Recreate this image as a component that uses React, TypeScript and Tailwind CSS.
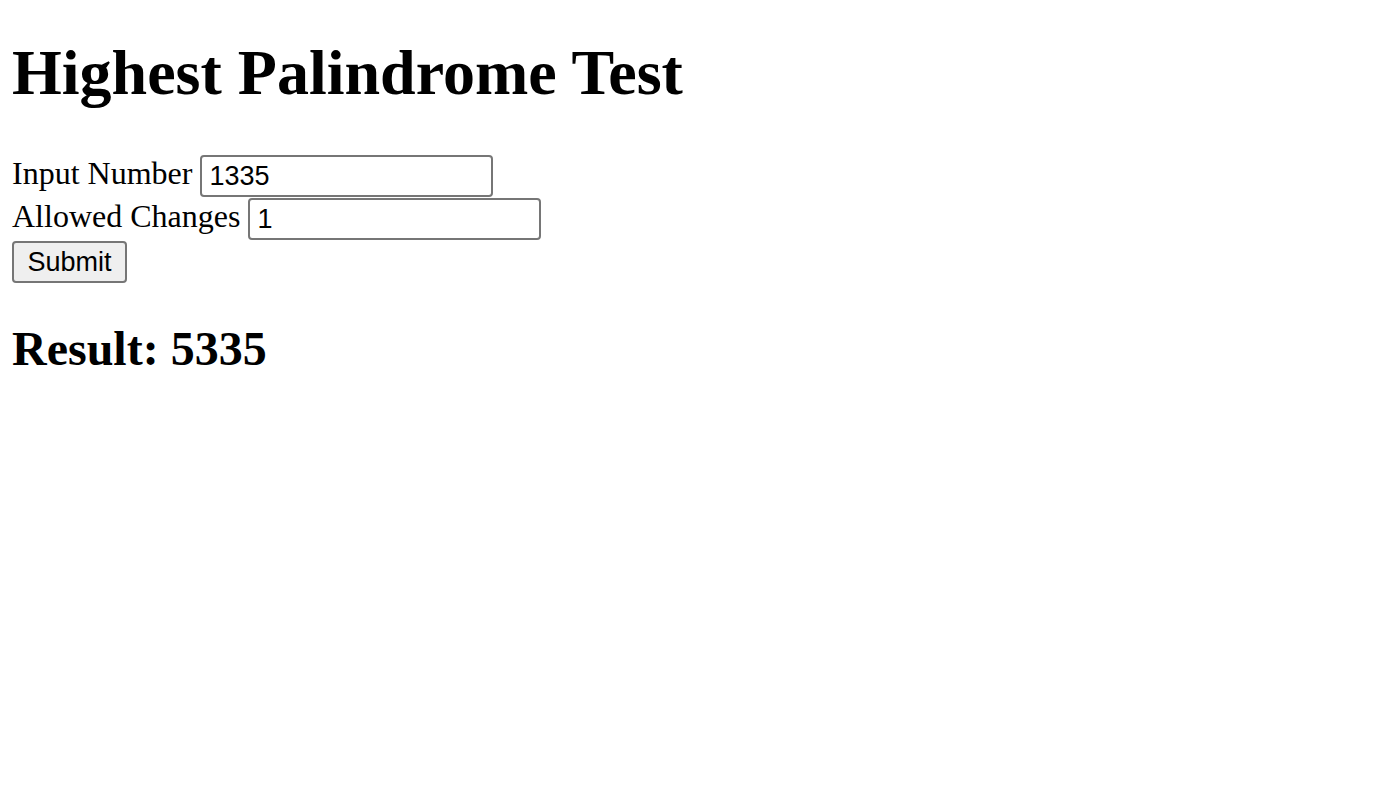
import React, { useState } from 'react';

export default function App() {
  const [num, setNum] = useState('1335');
  const [changes, setChanges] = useState('1');

  return (
    <div className="min-h-screen bg-white pl-3 pt-[36px] font-['Liberation_Serif',serif] text-black">
      <h1 className="m-0 text-[64px] font-bold leading-[74px]">Highest Palindrome Test</h1>

      <form className="mt-[45px] flex flex-col" onSubmit={(e) => e.preventDefault()}>
        <div className="flex h-[43px] items-start">
          <label className="-mt-[3px] text-[32px] leading-[42px]">Input Number</label>
          <input
            className="ml-2 h-[42px] w-[293px] rounded-[4px] border-2 border-[#767676] px-[7px] font-['Liberation_Sans',sans-serif] text-[27px] outline-none"
            value={num}
            onChange={(e) => setNum(e.target.value)}
          />
        </div>
        <div className="flex h-[43px] items-start">
          <label className="-mt-[3px] text-[32px] leading-[42px]">Allowed Changes</label>
          <input
            className="ml-2 h-[42px] w-[293px] rounded-[4px] border-2 border-[#767676] px-[7px] font-['Liberation_Sans',sans-serif] text-[27px] outline-none"
            value={changes}
            onChange={(e) => setChanges(e.target.value)}
          />
        </div>
        <div className="flex h-[43px] items-start">
          <button
            type="submit"
            className="h-[42px] w-[115px] rounded-[4px] border-2 border-[#767676] bg-[#efefef] font-['Liberation_Sans',sans-serif] text-[27px] leading-none"
          >
            Submit
          </button>
        </div>
      </form>

      <h2 className="mt-[37px] text-[48px] font-bold leading-[56px]">Result: 5335</h2>
    </div>
  );
}
